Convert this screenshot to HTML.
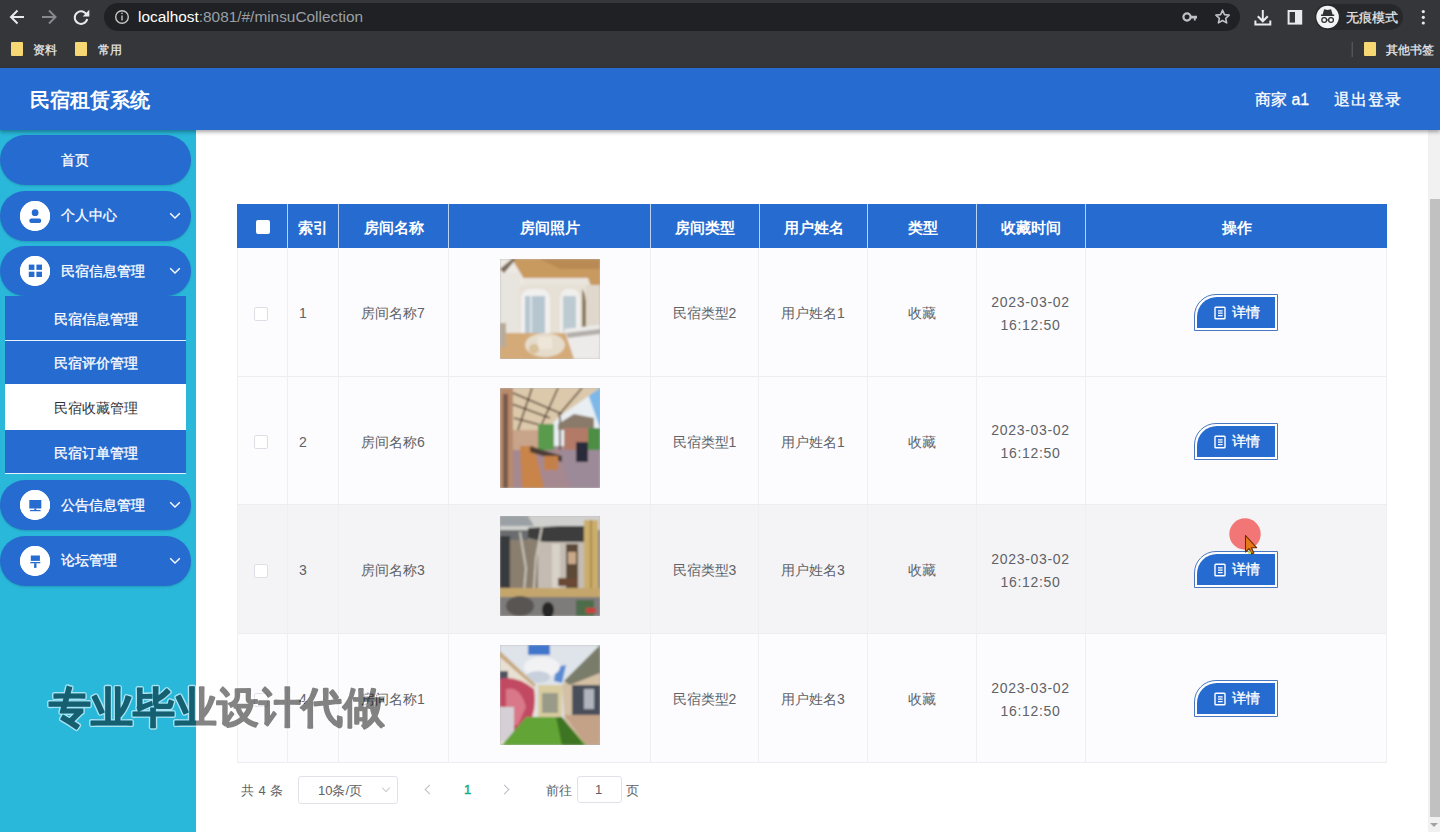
<!DOCTYPE html>
<html><head><meta charset="utf-8">
<style>
*{box-sizing:border-box;margin:0;padding:0}
html,body{width:1440px;height:832px;overflow:hidden;background:#fff;font-family:"Liberation Sans",sans-serif;position:relative}
.abs{position:absolute}
/* browser chrome */
#toolbar{left:0;top:0;width:1440px;height:34px;background:#35363a}
#bookmarks{left:0;top:34px;width:1440px;height:34px;background:#35363a}
#omnibox{left:104px;top:3px;width:1136px;height:28px;background:#202124;border-radius:14px}
.url{left:138px;top:8px;font-size:15.4px;color:#fff;white-space:nowrap;letter-spacing:0}
.url span{color:#9aa0a6}
.bm{font-size:12px;color:#e8eaed;white-space:nowrap;-webkit-text-stroke:0.25px #e8eaed}
.folder{width:12px;height:14px;background:#f7d774;border-radius:1px}
/* app header */
#header{left:0;top:68px;width:1440px;height:62px;background:#266bd0;box-shadow:0 2px 4px rgba(0,0,0,.35);z-index:5}
.title{left:30px;top:87px;font-size:20px;font-weight:bold;color:#fff;white-space:nowrap;z-index:6}
.hdr-r{top:90px;font-size:16px;color:#fff;white-space:nowrap;z-index:6;-webkit-text-stroke:0.3px #fff}
/* sidebar */
#sidebar{left:0;top:130px;width:196px;height:702px;background:#29b7da}
.pill{left:0;width:191px;height:50px;background:#266bd0;border-radius:25px;box-shadow:0 1px 2px rgba(0,0,0,.15)}
.pill .txt{position:absolute;left:61px;top:16.5px;font-size:14px;color:#fff;white-space:nowrap;-webkit-text-stroke:0.3px #fff}
.pill .ico{position:absolute;left:20px;top:10px;width:30px;height:30px;border-radius:15px;background:#fff}
.pill .chev{position:absolute;left:168.3px;top:20.3px}
.sub{left:5px;width:181px;background:#266bd0}
.sub .txt{position:absolute;left:0;width:181px;text-align:center;font-size:14px;color:#fff;white-space:nowrap;-webkit-text-stroke:0.3px #fff;margin-top:1px}
/* main */
#main{left:196px;top:130px;width:1232px;height:702px;background:#fff}
#scroll{left:1428px;top:130px;width:12px;height:702px;background:#f1f1f1}
#thumb{left:1430px;top:198.5px;width:10px;height:618px;background:#c1c1c1}
/* table */
.th{top:204px;height:44px;background:#266bd0;border-left:1px solid #b8d3f5}
.th span{position:absolute;left:0;right:0;top:14.5px;text-align:center;font-size:14.6px;font-weight:bold;color:#fff;white-space:nowrap}
.row{left:237px;width:1150px;background:#fcfcfe;border-bottom:1px solid #ededf0}
.vline{top:248px;width:1px;height:515px;background:#efeff1}
.cell{font-size:14px;color:#606266;white-space:nowrap;text-align:center;margin-top:1.5px}
.cb{width:14px;height:14px;border:1px solid #dcdfe6;border-radius:2px;background:#fff}
.btn{width:84px;height:37px}

.date{line-height:23.3px;letter-spacing:0.7px;margin-top:0}
.img{width:100px;height:100px;background:#bbb;overflow:hidden}.img svg{display:block}
.btn{width:84px;height:37px;border:1px solid #4a78c0;border-top-left-radius:22px;background:#fff}
.btn .bi{position:absolute;left:2px;top:2px;right:2px;bottom:2px;background:#266bd0;border-top-left-radius:20px}
.btn .bt{position:absolute;left:37px;top:9px;font-size:14px;color:#fff;white-space:nowrap;-webkit-text-stroke:0.3px #fff}
.btn .doc{position:absolute;left:19px;top:11px}
.pg{font-size:13px;color:#606266;white-space:nowrap;margin-top:1px}
.selbox{border:1px solid #e0e2e8;border-radius:3px;background:#fff}
.chevd{width:7px;height:7px;border-right:1px solid #c0c4cc;border-bottom:1px solid #c0c4cc;transform:rotate(45deg)}
.chevl{width:7px;height:7px;border-left:1.6px solid #babdc3;border-bottom:1.6px solid #babdc3;transform:rotate(45deg)}
.chevr{width:7px;height:7px;border-right:1.6px solid #babdc3;border-top:1.6px solid #babdc3;transform:rotate(45deg)}

.wmclip{top:670px;height:70px;overflow:hidden;z-index:15}
.wm{position:absolute;top:8.5px;font-size:42px;font-weight:900;white-space:nowrap;-webkit-text-stroke:1.2px currentColor;text-shadow:1px 0 0 rgba(255,255,255,.75),-1px 0 0 rgba(255,255,255,.75),0 1px 0 rgba(255,255,255,.75),0 -1px 0 rgba(255,255,255,.75)}
</style></head><body>
<div id="toolbar" class="abs"></div>
<div id="omnibox" class="abs"></div>
<div class="abs url">localhost<span>:8081/#/minsuCollection</span></div>
<div id="bookmarks" class="abs"></div>
<svg class="abs" style="left:0;top:0;z-index:2" width="1440" height="68" viewBox="0 0 1440 68">
<g fill="none" stroke="#e8eaed" stroke-width="2" stroke-linecap="butt">
<path d="M24 17H11.5M17.5 10.5L11 17l6.5 6.5"/>
</g>
<g fill="none" stroke="#86898e" stroke-width="2">
<path d="M42 17h12.5M49 10.5l6.5 6.5-6.5 6.5"/>
</g>
<g fill="none" stroke="#e8eaed" stroke-width="2">
<path d="M87 15.5A6.3 6.3 0 1 0 87.2 19"/>
</g>
<path d="M89.3 9.8v6.6h-6.6z" fill="#e8eaed"/>
<circle cx="122" cy="17" r="6.3" fill="none" stroke="#c4c7c5" stroke-width="1.4"/>
<rect x="121.3" y="15.5" width="1.4" height="5" fill="#c4c7c5"/>
<rect x="121.3" y="12.6" width="1.4" height="1.5" fill="#c4c7c5"/>
<!-- key -->
<circle cx="1187" cy="17" r="3.6" fill="none" stroke="#bdc1c6" stroke-width="2.2"/>
<path d="M1190.5 15.8h6.5v2.6h-1.3v2h-1.8v-2h-3.4z" fill="#bdc1c6"/>
<!-- star -->
<path d="M1222.5 10.2l2 4.4 4.7.5-3.5 3.2 1 4.6-4.2-2.4-4.1 2.4 1-4.6-3.5-3.2 4.7-.5z" fill="none" stroke="#bdc1c6" stroke-width="1.6" stroke-linejoin="round"/>
<!-- download -->
<g fill="none" stroke="#e8eaed" stroke-width="2">
<path d="M1262.8 10v11M1257.8 16.3l5 5 5-5M1255.4 20.5v3.9h14.9v-3.9"/>
</g>
<!-- side panel -->
<rect x="1288.6" y="11" width="12.6" height="12.6" fill="none" stroke="#e8eaed" stroke-width="2"/>
<rect x="1295" y="11" width="6.2" height="12.6" fill="#e8eaed"/>
<!-- incognito pill -->
<rect x="1315" y="4" width="88" height="26" rx="13" fill="#27282b"/>
<circle cx="1327.6" cy="17" r="11.3" fill="#f1f3f4"/>
<path d="M1321 15.2h13.2M1323.3 14.6l1.3-4.5 3 .7 3-.7 1.3 4.5z" stroke="#303134" stroke-width="1.4" fill="#303134"/>
<circle cx="1324.2" cy="20" r="2.4" fill="none" stroke="#303134" stroke-width="1.3"/>
<circle cx="1331" cy="20" r="2.4" fill="none" stroke="#303134" stroke-width="1.3"/>
<path d="M1326.6 20h2" stroke="#303134" stroke-width="1.2"/>
<!-- dots -->
<circle cx="1423.3" cy="11.6" r="1.6" fill="#e8eaed"/>
<circle cx="1423.3" cy="17.3" r="1.6" fill="#e8eaed"/>
<circle cx="1423.3" cy="23" r="1.6" fill="#e8eaed"/>
<!-- bookmark divider -->
<rect x="1351.7" y="42" width="1" height="15" fill="#5f6368"/>
</svg>
<div class="abs bm" style="left:1346px;top:10px;font-size:12.5px;z-index:3">无痕模式</div>

<div class="abs folder" style="left:11px;top:42px"></div>
<div class="abs bm" style="left:33px;top:42px">资料</div>
<div class="abs folder" style="left:75px;top:42px"></div>
<div class="abs bm" style="left:98px;top:42px">常用</div>
<div class="abs folder" style="left:1364px;top:42px"></div>
<div class="abs bm" style="left:1386px;top:42px">其他书签</div>

<div id="header" class="abs"></div>
<div class="abs title">民宿租赁系统</div>
<div class="abs hdr-r" style="left:1255px">商家 a1</div>
<div class="abs hdr-r" style="left:1334px;letter-spacing:1px">退出登录</div>

<div id="sidebar" class="abs"></div>
<div class="abs pill" style="top:135px"><div class="txt">首页</div></div>
<div class="abs pill" style="top:190.5px"><div class="ico"><svg width="30" height="30" viewBox="0 0 30 30" style="position:absolute;left:0;top:0"><circle cx="15" cy="15" r="15" fill="#fff"/><circle cx="15.1" cy="11.7" r="3.4" fill="#266bd0"/><rect x="9.3" y="17.5" width="11.9" height="4.4" rx="2" fill="#266bd0"/></svg></div><div class="txt">个人中心</div><svg class="chev" width="14" height="10" viewBox="0 0 14 10"><path d="M2.2 2.2L7 7l4.8-4.8" fill="none" stroke="#fff" stroke-width="1.4"/></svg></div>
<div class="abs pill" style="top:246px"><div class="ico"><svg width="30" height="30" viewBox="0 0 30 30" style="position:absolute;left:0;top:0"><circle cx="15" cy="15" r="15" fill="#fff"/><rect x="8.8" y="8.6" width="5.6" height="5.3" fill="#266bd0"/><rect x="16.4" y="8.6" width="5.6" height="5.3" fill="#266bd0"/><rect x="8.8" y="15.7" width="5.6" height="5.3" fill="#266bd0"/><rect x="16.4" y="15.7" width="5.6" height="5.3" fill="#266bd0"/></svg></div><div class="txt">民宿信息管理</div><svg class="chev" width="14" height="10" viewBox="0 0 14 10"><path d="M2.2 2.2L7 7l4.8-4.8" fill="none" stroke="#fff" stroke-width="1.4"/></svg></div>
<div class="abs sub" style="top:296px;height:45px;border-bottom:1px solid #e6f2ff"><div class="txt" style="top:14px">民宿信息管理</div></div>
<div class="abs sub" style="top:341px;height:43px"><div class="txt" style="top:13px">民宿评价管理</div></div>
<div class="abs sub" style="top:384px;height:46px;background:#fff"><div class="txt" style="top:15px;color:#303133;-webkit-text-stroke:0">民宿收藏管理</div></div>
<div class="abs sub" style="top:430px;height:44px;border-bottom:1px solid #e6f2ff"><div class="txt" style="top:14px">民宿订单管理</div></div>
<div class="abs pill" style="top:480px"><div class="ico"><svg width="30" height="30" viewBox="0 0 30 30" style="position:absolute;left:0;top:0"><circle cx="15" cy="15" r="15" fill="#fff"/><rect x="9.3" y="10" width="12" height="8.5" fill="#266bd0"/><rect x="14.3" y="18.5" width="2" height="1.5" fill="#266bd0"/><rect x="10" y="20" width="10.6" height="1.2" fill="#266bd0"/></svg></div><div class="txt">公告信息管理</div><svg class="chev" width="14" height="10" viewBox="0 0 14 10"><path d="M2.2 2.2L7 7l4.8-4.8" fill="none" stroke="#fff" stroke-width="1.4"/></svg></div>
<div class="abs pill" style="top:535.5px"><div class="ico"><svg width="30" height="30" viewBox="0 0 30 30" style="position:absolute;left:0;top:0"><circle cx="15" cy="15" r="15" fill="#fff"/><rect x="10.8" y="9.5" width="9.1" height="5.4" fill="#266bd0"/><rect x="10.3" y="16" width="10" height="1.3" fill="#266bd0"/><rect x="14.1" y="17.3" width="2.4" height="4.6" fill="#266bd0"/></svg></div><div class="txt">论坛管理</div><svg class="chev" width="14" height="10" viewBox="0 0 14 10"><path d="M2.2 2.2L7 7l4.8-4.8" fill="none" stroke="#fff" stroke-width="1.4"/></svg></div>

<div id="main" class="abs"></div>
<div id="scroll" class="abs"></div>
<div id="thumb" class="abs"></div><svg class="abs" style="left:1428px;top:818px" width="12" height="14"><path d="M2 5h8l-4 4z" fill="#a3a3a3"/></svg>

<!-- table header -->
<div class="abs th" style="left:237px;width:51px;border-left:none"></div>
<div class="abs cb" style="left:256px;top:220px;border:none"></div>
<div class="abs th" style="left:287px;width:51px"><span>索引</span></div>
<div class="abs th" style="left:338px;width:111px"><span>房间名称</span></div>
<div class="abs th" style="left:448px;width:202px"><span>房间照片</span></div>
<div class="abs th" style="left:650px;width:109px"><span>房间类型</span></div>
<div class="abs th" style="left:759px;width:109px"><span>用户姓名</span></div>
<div class="abs th" style="left:867px;width:110px"><span>类型</span></div>
<div class="abs th" style="left:976px;width:109px"><span>收藏时间</span></div>
<div class="abs th" style="left:1085px;width:302px"><span>操作</span></div>

<div class="abs row" style="top:248px;height:128.7px;background:#fcfcfe"></div>
<div class="abs cb" style="left:254px;top:306.5px"></div>
<div class="abs cell" style="left:299px;top:303.5px">1</div>
<div class="abs cell" style="left:338px;width:110px;top:303.5px">房间名称7</div>
<div class="abs img img1" style="left:500px;top:259.0px"><svg width="100" height="100" viewBox="0 0 100 100"><defs><filter id="b1" x="0" y="0" width="100%" height="100%"><feGaussianBlur stdDeviation="1"/></filter></defs><g filter="url(#b1)">
<rect width="100" height="100" fill="#e9e4dc"/>
<path d="M10 0H100V26L92 30 88 19H22z" fill="#c99a5e"/>
<path d="M40 0H100V10H60z" fill="#b98a52"/>
<path d="M0 0H12L24 20V28H0z" fill="#ece8e2"/>
<path d="M0 10L12 0H16L4 14z" fill="#7a6a58"/>
<rect x="0" y="14" width="20" height="72" fill="#e8e4de"/>
<rect x="20" y="26" width="66" height="48" fill="#e6e0d6"/>
<path d="M21 42Q21 30 31 30H40Q50 30 50 42V76H21z" fill="#f0f0ee"/>
<rect x="25" y="37" width="20" height="37" fill="#b6c6d0"/>
<rect x="30" y="37" width="2" height="37" fill="#e0e4e6"/>
<path d="M60 42Q60 30 68 30H72Q80 30 80 42V74H60z" fill="#f0efec"/>
<rect x="63" y="37" width="13" height="36" fill="#bccad2"/>
<path d="M82 30Q88 36 86 70H82z" fill="#8a7c58"/>
<path d="M86 34Q92 40 90 68H86z" fill="#6e6244"/>
<rect x="86" y="26" width="14" height="46" fill="#e0d8cc"/>
<rect x="0" y="74" width="100" height="26" fill="#d4aa78"/>
<rect x="0" y="64" width="6" height="24" fill="#b8ab9a"/>
<ellipse cx="45" cy="86" rx="20" ry="12" fill="#e6dccb"/>
<rect x="38" y="78" width="14" height="12" fill="#efe6da"/>
<ellipse cx="34" cy="90" rx="5" ry="5" fill="#d8c09a"/>
<path d="M64 70L100 66V100H74z" fill="#ecebea"/>
<path d="M66 74L100 70V75L68 79z" fill="#b4aeaa"/>
</g></svg></div>
<div class="abs cell" style="left:650px;width:109px;top:303.5px">民宿类型2</div>
<div class="abs cell" style="left:759px;width:108px;top:303.5px">用户姓名1</div>
<div class="abs cell" style="left:867px;width:110px;top:303.5px">收藏</div>
<div class="abs cell date" style="left:976px;width:109px;top:290.5px">2023-03-02<br>16:12:50</div>
<div class="abs btn" style="left:1194px;top:294.0px"><div class="bi"></div><svg class="doc" width="13" height="14" viewBox="0 0 13 14"><rect x="1" y="1.2" width="10" height="11.6" rx="0.8" fill="none" stroke="#fff" stroke-width="1.4"/><path d="M4 4.8h4.6M4 7.2h4.6M4 9.6h4.6" stroke="#fff" stroke-width="1.2"/></svg><div class="bt">详情</div></div>
<div class="abs row" style="top:376.7px;height:128.7px;background:#fcfcfe"></div>
<div class="abs cb" style="left:254px;top:435.2px"></div>
<div class="abs cell" style="left:299px;top:432.2px">2</div>
<div class="abs cell" style="left:338px;width:110px;top:432.2px">房间名称6</div>
<div class="abs img img2" style="left:500px;top:387.7px"><svg width="100" height="100" viewBox="0 0 100 100"><defs><filter id="b2" x="0" y="0" width="100%" height="100%"><feGaussianBlur stdDeviation="0.9"/></filter></defs><g filter="url(#b2)">
<rect width="100" height="100" fill="#a48c94"/>
<path d="M50 0H100V58H50z" fill="#e8eef2"/>
<path d="M86 0H100V40z" fill="#7cb8ea"/>
<path d="M0 0H100L60 28 46 42 14 44 0 40z" fill="#dcc9ac"/>
<g stroke="#5a4636" stroke-width="1.6" fill="none"><path d="M6 2L62 26M32 0L18 42M58 0L40 40M82 0L58 28M12 16L50 30M14 30L44 38M60 28V84"/></g>
<path d="M58 36L74 26L94 30V42H58z" fill="#8a7a6a"/>
<rect x="64" y="40" width="26" height="22" fill="#b47a68"/>
<rect x="88" y="40" width="12" height="38" fill="#4e8e46"/>
<rect x="0" y="0" width="13" height="100" fill="#b88a6c"/>
<rect x="3" y="6" width="5" height="94" fill="#7a5a4c"/>
<rect x="13" y="42" width="26" height="24" fill="#c8a48a"/>
<rect x="38" y="36" width="16" height="26" fill="#5a9a4e"/>
<path d="M13 62H100V100H13z" fill="#a68890"/>
<path d="M60 62H100V100H70z" fill="#9c8a98"/>
<path d="M20 58L34 58L44 100H22z" fill="#c8844a"/>
<path d="M30 58L62 68V74L30 64z" fill="#4e3e36"/>
<rect x="44" y="68" width="14" height="14" fill="#c48048"/>
<rect x="76" y="54" width="12" height="20" fill="#2c2c3a"/>
</g></svg></div>
<div class="abs cell" style="left:650px;width:109px;top:432.2px">民宿类型1</div>
<div class="abs cell" style="left:759px;width:108px;top:432.2px">用户姓名1</div>
<div class="abs cell" style="left:867px;width:110px;top:432.2px">收藏</div>
<div class="abs cell date" style="left:976px;width:109px;top:419.2px">2023-03-02<br>16:12:50</div>
<div class="abs btn" style="left:1194px;top:422.7px"><div class="bi"></div><svg class="doc" width="13" height="14" viewBox="0 0 13 14"><rect x="1" y="1.2" width="10" height="11.6" rx="0.8" fill="none" stroke="#fff" stroke-width="1.4"/><path d="M4 4.8h4.6M4 7.2h4.6M4 9.6h4.6" stroke="#fff" stroke-width="1.2"/></svg><div class="bt">详情</div></div>
<div class="abs row" style="top:505.4px;height:128.7px;background:#f4f4f6"></div>
<div class="abs cb" style="left:254px;top:563.9px"></div>
<div class="abs cell" style="left:299px;top:560.9px">3</div>
<div class="abs cell" style="left:338px;width:110px;top:560.9px">房间名称3</div>
<div class="abs img img3" style="left:500px;top:516.4px"><svg width="100" height="100" viewBox="0 0 100 100"><defs><filter id="b3" x="0" y="0" width="100%" height="100%"><feGaussianBlur stdDeviation="1"/></filter></defs><g filter="url(#b3)">
<rect width="100" height="100" fill="#8c8882"/>
<rect x="0" y="0" width="100" height="14" fill="#d0d0ce"/>
<path d="M0 0H28L34 10H0z" fill="#9aa0a4"/>
<path d="M28 12L60 10H92V26H46L28 22z" fill="#3e3e3c"/>
<rect x="0" y="14" width="28" height="12" fill="#6a6c6e"/>
<rect x="0" y="20" width="10" height="62" fill="#383a3e"/>
<rect x="10" y="24" width="30" height="56" fill="#8a7e6e"/>
<rect x="38" y="26" width="46" height="50" fill="#c4bcb2"/>
<rect x="52" y="28" width="8" height="46" fill="#d8d2c8"/>
<rect x="66" y="28" width="12" height="46" fill="#5c4838"/>
<rect x="68" y="36" width="8" height="12" fill="#c8a888"/>
<rect x="58" y="62" width="20" height="8" fill="#6a4a36"/>
<rect x="84" y="4" width="14" height="74" fill="#ccae6c"/>
<rect x="90" y="4" width="2" height="74" fill="#a88a4c"/>
<g stroke="#c8c4bc" stroke-width="2" fill="none"><path d="M22 100L26 52L20 16M32 100L36 42L42 10"/></g>
<rect x="0" y="72" width="100" height="9" fill="#c4a66c"/>
<rect x="0" y="81" width="100" height="19" fill="#7e7c7a"/>
<ellipse cx="48" cy="94" rx="6" ry="8" fill="#262626"/>
<ellipse cx="20" cy="90" rx="14" ry="10" fill="#585452"/>
<rect x="76" y="84" width="18" height="16" fill="#4e6c48"/>
<rect x="86" y="92" width="10" height="5" fill="#c84040"/>
</g></svg></div>
<div class="abs cell" style="left:650px;width:109px;top:560.9px">民宿类型3</div>
<div class="abs cell" style="left:759px;width:108px;top:560.9px">用户姓名3</div>
<div class="abs cell" style="left:867px;width:110px;top:560.9px">收藏</div>
<div class="abs cell date" style="left:976px;width:109px;top:547.9px">2023-03-02<br>16:12:50</div>
<div class="abs btn" style="left:1194px;top:551.4px"><div class="bi"></div><svg class="doc" width="13" height="14" viewBox="0 0 13 14"><rect x="1" y="1.2" width="10" height="11.6" rx="0.8" fill="none" stroke="#fff" stroke-width="1.4"/><path d="M4 4.8h4.6M4 7.2h4.6M4 9.6h4.6" stroke="#fff" stroke-width="1.2"/></svg><div class="bt">详情</div></div>
<div class="abs row" style="top:634.1px;height:128.7px;background:#fcfcfe"></div>
<div class="abs cb" style="left:254px;top:692.6px"></div>
<div class="abs cell" style="left:299px;top:689.6px">4</div>
<div class="abs cell" style="left:338px;width:110px;top:689.6px">房间名称1</div>
<div class="abs img img4" style="left:500px;top:645.1px"><svg width="100" height="100" viewBox="0 0 100 100"><defs><filter id="b4" x="0" y="0" width="100%" height="100%"><feGaussianBlur stdDeviation="1"/></filter></defs><g filter="url(#b4)">
<rect width="100" height="100" fill="#dfe4ea"/>
<rect x="28" y="0" width="22" height="10" fill="#3f76cc"/>
<path d="M56 22L66 20L62 38L54 36z" fill="#5a8ad2"/>
<ellipse cx="42" cy="22" rx="18" ry="10" fill="#f2f2f4"/>
<ellipse cx="38" cy="32" rx="12" ry="6" fill="#c8d0dc"/>
<path d="M0 6L36 40V100H0z" fill="#e8e0d2"/>
<path d="M0 6L36 40L34 42L0 12z" fill="#c8a880"/>
<rect x="0" y="26" width="8" height="10" fill="#505260"/>
<path d="M0 34Q16 30 34 44Q38 70 24 86L12 92H0z" fill="#c24a62"/>
<path d="M6 44Q20 40 26 62L18 80H6z" fill="#d87888"/>
<rect x="0" y="62" width="14" height="34" fill="#d6d0d6"/>
<path d="M100 0V100H66L62 40 96 6z" fill="#d4c0a4"/>
<path d="M100 0V28L70 40L64 36z" fill="#7a7c6a"/>
<rect x="72" y="40" width="28" height="30" fill="#48505a"/>
<rect x="84" y="44" width="10" height="20" fill="#b0b4bc"/>
<path d="M64 70H100V100H86z" fill="#c4a288"/>
<rect x="38" y="40" width="24" height="32" fill="#d8cca0"/>
<rect x="42" y="48" width="16" height="20" fill="#9a9a88"/>
<path d="M2 100L26 72H60L72 84L86 100z" fill="#62a434"/>
<path d="M56 72H62L84 100H62z" fill="#3c7424"/>
</g></svg></div>
<div class="abs cell" style="left:650px;width:109px;top:689.6px">民宿类型2</div>
<div class="abs cell" style="left:759px;width:108px;top:689.6px">用户姓名3</div>
<div class="abs cell" style="left:867px;width:110px;top:689.6px">收藏</div>
<div class="abs cell date" style="left:976px;width:109px;top:676.6px">2023-03-02<br>16:12:50</div>
<div class="abs btn" style="left:1194px;top:680.1px"><div class="bi"></div><svg class="doc" width="13" height="14" viewBox="0 0 13 14"><rect x="1" y="1.2" width="10" height="11.6" rx="0.8" fill="none" stroke="#fff" stroke-width="1.4"/><path d="M4 4.8h4.6M4 7.2h4.6M4 9.6h4.6" stroke="#fff" stroke-width="1.2"/></svg><div class="bt">详情</div></div>

<!-- vertical grid lines -->
<div class="abs vline" style="left:237px"></div>
<div class="abs vline" style="left:287px"></div>
<div class="abs vline" style="left:338px"></div>
<div class="abs vline" style="left:448px"></div>
<div class="abs vline" style="left:650px"></div>
<div class="abs vline" style="left:758px"></div>
<div class="abs vline" style="left:867px"></div>
<div class="abs vline" style="left:976px"></div>
<div class="abs vline" style="left:1085px"></div>
<div class="abs vline" style="left:1386px"></div>

<!-- pagination -->
<div class="abs pg" style="left:241px;top:781px;letter-spacing:0.5px">共 4 条</div>
<div class="abs selbox" style="left:298px;top:776px;width:100px;height:28px"></div>
<div class="abs pg" style="left:318px;top:781px">10条/页</div>
<div class="abs chevd" style="left:383px;top:785px;width:6px;height:6px;border-color:#c8cbd0"></div>
<div class="abs chevl" style="left:426px;top:786px"></div>
<div class="abs pg" style="left:464px;top:781px;color:#1aae8f;-webkit-text-stroke:0.5px #1aae8f">1</div>
<div class="abs chevr" style="left:501px;top:786px"></div>
<div class="abs pg" style="left:546px;top:781px">前往</div>
<div class="abs selbox" style="left:577px;top:776px;width:45px;height:27px"></div>
<div class="abs pg" style="left:595px;top:781px">1</div>
<div class="abs pg" style="left:626px;top:781px">页</div>


<svg class="abs" style="left:0;top:660px;z-index:15;overflow:visible" width="440" height="90" viewBox="0 660 440 90">
<defs><mask id="wmm" maskUnits="userSpaceOnUse" x="0" y="660" width="440" height="90"><rect x="0" y="660" width="440" height="90" fill="#fff"/><text x="49" y="722" font-size="42" font-weight="900" fill="#000" stroke="#000" stroke-width="1.2" font-family="Liberation Sans, sans-serif">专业毕业设计代做</text></mask></defs>
<g opacity="0.6" mask="url(#wmm)"><text x="49" y="722" font-size="42" font-weight="900" fill="none" stroke="#fff" stroke-width="4" stroke-linejoin="round" font-family="Liberation Sans, sans-serif">专业毕业设计代做</text></g>
<g opacity="0.48"><text x="49" y="722" font-size="42" font-weight="900" fill="#000" stroke="#000" stroke-width="1.2" stroke-linejoin="round" font-family="Liberation Sans, sans-serif">专业毕业设计代做</text></g>
</svg>
<svg class="abs" style="left:1220px;top:510px;z-index:20" width="50" height="50" viewBox="1220 510 50 50">
<circle cx="1245" cy="534" r="15.7" fill="#f26a6a" fill-opacity="0.92"/>
<path d="M1245.5 535.5V552l3.6-3.4 2.6 5.4 2.2-1.1-2.5-5.2h5.2z" fill="#e67a16" stroke="#6a2a08" stroke-width="1.1" stroke-linejoin="round"/>
<circle cx="1249.5" cy="552.5" r="1.5" fill="#c8e04a"/>
</svg>
</body></html>
